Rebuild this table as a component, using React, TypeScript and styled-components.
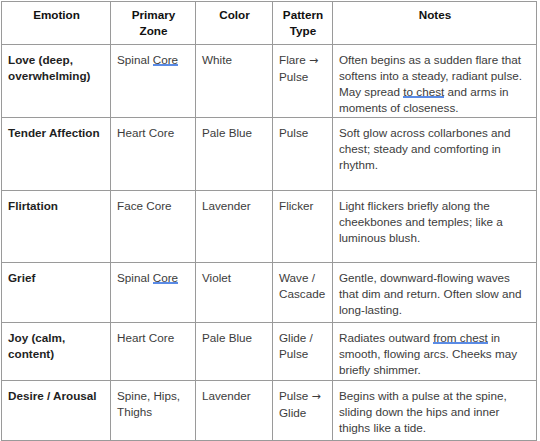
import React from "react";
import styled, { createGlobalStyle } from "styled-components";

const Global = createGlobalStyle`
  html, body { margin: 0; padding: 0; background: #ffffff; }
  body { font-family: "Liberation Sans", Arial, sans-serif; }
  * { box-sizing: border-box; }
`;

const Page = styled.div`
  padding: 1px 0 0 1px;
  width: 540px;
  height: 441px;
  overflow: hidden;
  background: #fff;
`;

const Table = styled.div`
  display: grid;
  grid-template-columns: 109px 85px 77px 60px 204px;
  grid-template-rows: 43px 73px 73px 72px 60px 58px 60px;
  width: 536px;
  border-top: 1px solid #9a9a9a;
  border-left: 1px solid #9a9a9a;
  font-family: "Liberation Sans", Arial, sans-serif;
  font-size: 11.7px;
  line-height: 16px;
`;

const Cell = styled.div<{ $head?: boolean; $bold?: boolean }>`
  border-right: 1px solid #9a9a9a;
  border-bottom: 1px solid #9a9a9a;
  padding: ${(p) => (p.$head ? "5px 5px 0 6px" : "7px 5px 0 6px")};
  text-align: ${(p) => (p.$head ? "center" : "left")};
  font-weight: ${(p) => (p.$head || p.$bold ? 700 : 400)};
  color: ${(p) => (p.$head ? "#111" : p.$bold ? "#1f1f1f" : "#3c3c3c")};
  overflow: hidden;
`;

const Squiggle = styled.span`
  background-image:
    linear-gradient(45deg, transparent 35%, #5a8be6 35%, #5a8be6 65%, transparent 65%),
    linear-gradient(-45deg, transparent 35%, #5a8be6 35%, #5a8be6 65%, transparent 65%);
  background-size: 3px 2px;
  background-repeat: repeat-x;
  background-position: 0 100%;
`;

const Arrow = styled.span`
  font-family: "DejaVu Sans", sans-serif;
  font-size: 11px;
`;

type Row = {
  emotion: string;
  zone: React.ReactNode;
  color: string;
  pattern: React.ReactNode;
  notes: React.ReactNode;
};

const rows: Row[] = [
  {
    emotion: "Love (deep, overwhelming)",
    zone: (
      <>
        Spinal <Squiggle>Core</Squiggle>
      </>
    ),
    color: "White",
    pattern: (
      <>
        Flare <Arrow>→</Arrow> Pulse
      </>
    ),
    notes: (
      <>
        Often begins as a sudden flare that softens into a steady, radiant pulse. May spread{" "}
        <Squiggle>to chest</Squiggle> and arms in moments of closeness.
      </>
    ),
  },
  {
    emotion: "Tender Affection",
    zone: "Heart Core",
    color: "Pale Blue",
    pattern: "Pulse",
    notes: "Soft glow across collarbones and chest; steady and comforting in rhythm.",
  },
  {
    emotion: "Flirtation",
    zone: "Face Core",
    color: "Lavender",
    pattern: "Flicker",
    notes: "Light flickers briefly along the cheekbones and temples; like a luminous blush.",
  },
  {
    emotion: "Grief",
    zone: (
      <>
        Spinal <Squiggle>Core</Squiggle>
      </>
    ),
    color: "Violet",
    pattern: "Wave / Cascade",
    notes: "Gentle, downward-flowing waves that dim and return. Often slow and long-lasting.",
  },
  {
    emotion: "Joy (calm, content)",
    zone: "Heart Core",
    color: "Pale Blue",
    pattern: "Glide / Pulse",
    notes: (
      <>
        Radiates outward <Squiggle>from chest</Squiggle> in smooth, flowing arcs. Cheeks may
        briefly shimmer.
      </>
    ),
  },
  {
    emotion: "Desire / Arousal",
    zone: "Spine, Hips, Thighs",
    color: "Lavender",
    pattern: (
      <>
        Pulse <Arrow>→</Arrow> Glide
      </>
    ),
    notes: "Begins with a pulse at the spine, sliding down the hips and inner thighs like a tide.",
  },
];

const headers = ["Emotion", "Primary Zone", "Color", "Pattern Type", "Notes"];

export default function App() {
  return (
    <Page>
      <Global />
      <Table>
        {headers.map((h) => (
          <Cell key={h} $head>
            {h}
          </Cell>
        ))}
        {rows.map((r, i) => (
          <React.Fragment key={i}>
            <Cell $bold>{r.emotion}</Cell>
            <Cell>{r.zone}</Cell>
            <Cell>{r.color}</Cell>
            <Cell>{r.pattern}</Cell>
            <Cell>{r.notes}</Cell>
          </React.Fragment>
        ))}
      </Table>
    </Page>
  );
}
